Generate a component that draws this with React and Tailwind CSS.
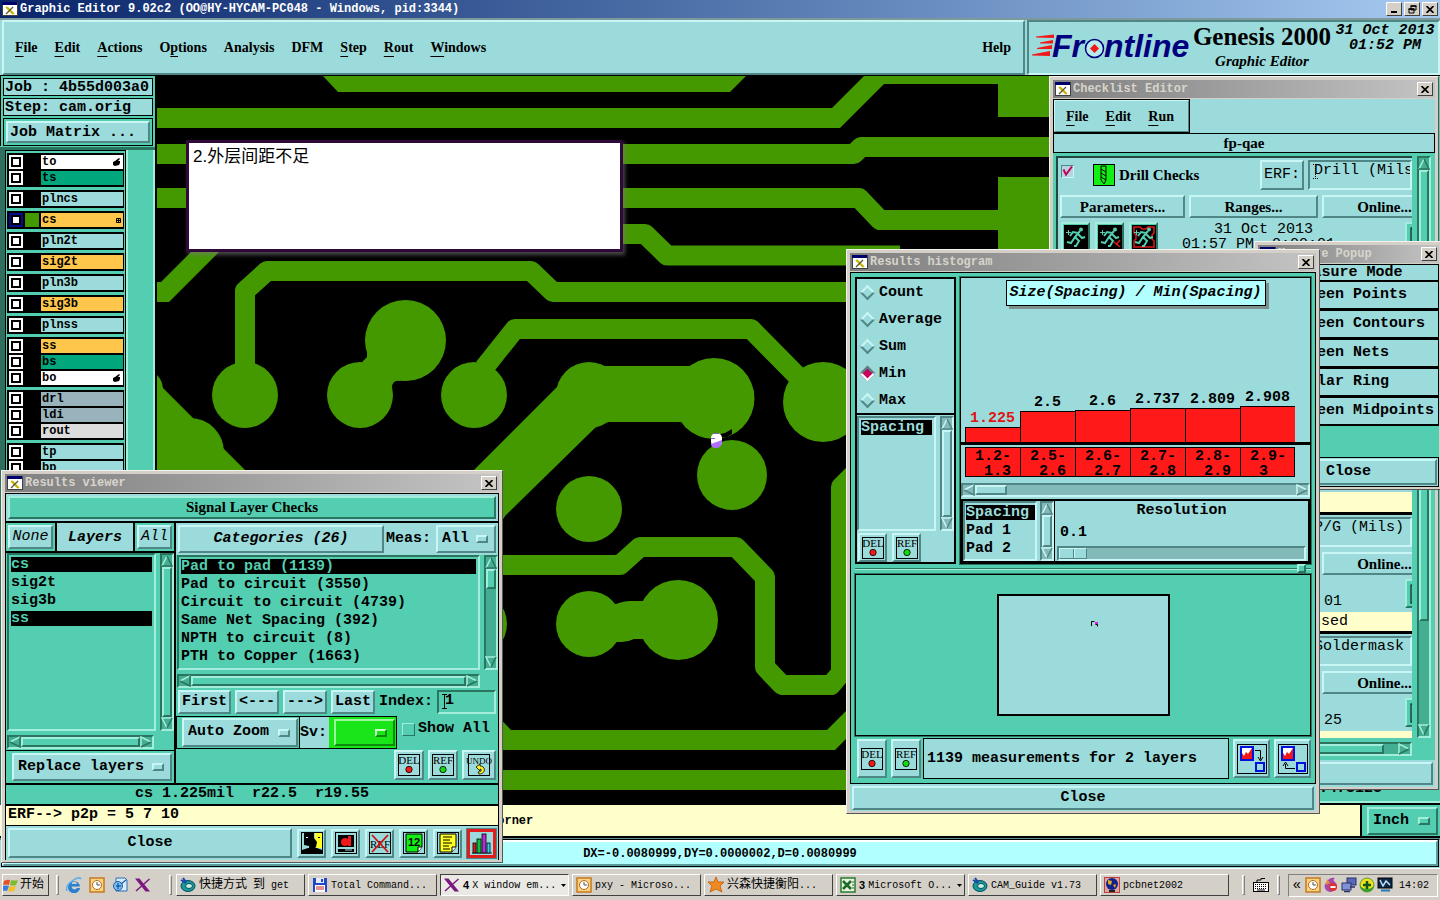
import React from "react";

const MONO = "[font-family:'Liberation_Mono','Noto_Sans_CJK_SC',monospace]";
const SERIF = "[font-family:'Liberation_Serif','Noto_Sans_CJK_SC',serif]";
const SANS = "[font-family:'Liberation_Sans','Noto_Sans_CJK_SC',sans-serif]";

const RAISED =
  "border-2 border-t-[#c8f6f4] border-l-[#c8f6f4] border-b-[#508686] border-r-[#508686] bg-[#9cdbdb]";
const SUNKEN =
  "border-2 border-t-[#508686] border-l-[#508686] border-b-[#c8f6f4] border-r-[#c8f6f4]";
const GREEN_RAISED =
  "border-2 border-t-[#a3eedb] border-l-[#a3eedb] border-b-[#2a7560] border-r-[#2a7560] bg-[#54ceb0]";
const GREEN_SUNKEN =
  "border-2 border-t-[#2a7560] border-l-[#2a7560] border-b-[#a3eedb] border-r-[#a3eedb]";
const WIN_BTN =
  "border border-t-white border-l-white border-b-[#404040] border-r-[#404040] bg-[#d4d0c8]";

/* ---------- shared widgets ---------- */

function XIcon() {
  return (
    <svg viewBox="0 0 16 14" className="h-[14px] w-4 shrink-0" aria-hidden="true">
      <rect x="0" y="0" width="16" height="14" fill="#404040" />
      <rect x="0" y="0" width="15" height="3" fill="#00006b" />
      <rect x="1" y="3" width="14" height="10" fill="#fff" />
      <path d="M4 5l7 7M5 5l7 7" stroke="#c8b400" strokeWidth="1.6" />
      <path d="M11 5l-7 7" stroke="#555533" strokeWidth="1.3" />
    </svg>
  );
}

function CloseGlyph() {
  return (
    <svg viewBox="0 0 8 7" className="h-[7px] w-2" aria-hidden="true">
      <path d="M.5 0l7 7M7.5 0l-7 7" stroke="#000" strokeWidth="1.7" />
    </svg>
  );
}

function CaptionButton({ label, children }) {
  return (
    <button aria-label={label} className={`flex h-[14px] w-4 items-center justify-center ${WIN_BTN}`}>
      {children}
    </button>
  );
}

function Win({ title, className, children }) {
  return (
    <section
      aria-label={title}
      className={`absolute flex flex-col border border-t-[#f4f2ee] border-l-[#f4f2ee] border-b-[#555] border-r-[#555] bg-[#d4d0c8] px-[3px] pt-[3px] pb-[2px] ${className}`}
    >
      <header className="flex h-[18px] shrink-0 items-center gap-[2px] bg-linear-to-r from-[#808080] to-[#c4c4c4] px-[2px]">
        <XIcon />
        <h2 className={`flex-1 text-[12px] leading-[18px] font-bold text-[#d8d4cc] ${MONO}`}>{title}</h2>
        <CaptionButton label={`Close ${title}`}>
          <CloseGlyph />
        </CaptionButton>
      </header>
      <div className="mt-px flex min-h-0 flex-1 flex-col">{children}</div>
    </section>
  );
}

function Arrow({ dir, green }) {
  const lt = green ? "#a3eedb" : "#c8f6f4";
  const dk = green ? "#2a7560" : "#508686";
  const shapes = {
    up: [["M5 0L0 10", lt], ["M5 0l5 10H0", dk]],
    down: [["M10 0H0l5 10", lt], ["M5 10L10 0", dk]],
    left: [["M10 0L0 5", lt], ["M10 0v10L0 5", dk]],
    right: [["M0 10V0l10 5", lt], ["M10 5L0 10", dk]],
  };
  return (
    <svg viewBox="-1 -1 12 12" className="size-[12px] shrink-0" aria-hidden="true">
      {shapes[dir].map(([d, c]) => (
        <path key={d} d={d} fill="none" stroke={c} strokeWidth="1.5" />
      ))}
    </svg>
  );
}

function VScroll({ green, thumb = "flex-1", className = "" }) {
  return (
    <div
      className={`flex w-[14px] shrink-0 flex-col items-center ${green ? GREEN_SUNKEN : SUNKEN} ${green ? "bg-[#43ae92]" : "bg-[#84b9b9]"} ${className}`}
    >
      <Arrow dir="up" green={green} />
      <div className="flex w-full min-h-0 flex-1 flex-col">
        <div className={`w-full ${thumb} ${green ? GREEN_RAISED : RAISED}`} />
      </div>
      <Arrow dir="down" green={green} />
    </div>
  );
}

function HScroll({ green, thumb = "flex-1", className = "" }) {
  return (
    <div
      className={`flex h-[14px] shrink-0 items-center ${green ? GREEN_SUNKEN : SUNKEN} ${green ? "bg-[#43ae92]" : "bg-[#84b9b9]"} ${className}`}
    >
      <Arrow dir="left" green={green} />
      <div className="flex h-full min-w-0 flex-1">
        <div className={`h-full ${thumb} ${green ? GREEN_RAISED : RAISED}`} />
      </div>
      <Arrow dir="right" green={green} />
    </div>
  );
}

function OptionMenu({ label, options, className = "", skin = RAISED, knob = RAISED }) {
  return (
    <div className={`flex items-center pr-[6px] ${skin} ${className}`}>
      <select aria-label={label} className="w-0 min-w-0 flex-1 appearance-none bg-transparent pl-[4px] outline-none">
        {options.map((o) => (
          <option key={o}>{o}</option>
        ))}
      </select>
      <span className={`h-[8px] w-3 shrink-0 ${knob}`} />
    </div>
  );
}

function BadgeIcon({ text, dot }) {
  return (
    <svg viewBox="0 0 24 24" className="size-6 overflow-visible" aria-hidden="true">
      <rect x="1.5" y="1.5" width="21" height="21" fill="none" stroke="#000" />
      <text x="12" y="11" textAnchor="middle" fontFamily="Liberation Serif" fontWeight="400" fontSize={text.length > 3 ? 9 : 11} fill="#000">
        {text}
      </text>
      {dot ? (
        <circle cx="12" cy="16.500" r="3.200" fill={dot} stroke="#000" strokeWidth=".8" />
      ) : (
        <path d="M9 14l4-3v2c6 0 6 8-1 8l-1-2c4 0 4-3 2-3v2z" fill="#ffee22" stroke="#000" strokeWidth=".8" />
      )}
    </svg>
  );
}

function IconButton({ label, className = "", children }) {
  return (
    <button aria-label={label} className={`flex shrink-0 items-center justify-center ${RAISED} ${className}`}>
      {children}
    </button>
  );
}

function TextCursor({ dotted }) {
  return (
    <svg viewBox="0 0 5 15" className="absolute top-[2px] left-[3px] h-[15px] w-[5px]" aria-hidden="true">
      <path d="M0 .5h5M2.500 0v15M0 14.500h5" stroke="#000" strokeDasharray={dotted ? "1 1" : undefined} />
    </svg>
  );
}

/* ---------- main window ---------- */

const MENUS = [
  ["", "F", "ile"],
  ["", "E", "dit"],
  ["", "A", "ctions"],
  ["O", "p", "tions"],
  ["Analysis", "", ""],
  ["DFM", "", ""],
  ["", "S", "tep"],
  ["", "R", "out"],
  ["", "W", "indows"],
];

function MenuButton({ parts }) {
  return (
    <button>
      {parts[0]}
      <span className="underline decoration-1 underline-offset-4">{parts[1]}</span>
      {parts[2]}
    </button>
  );
}

function FrontlineLogo() {
  return (
    <svg viewBox="0 -6 164 42" className="h-[42px] w-[164px] shrink-0" role="img" aria-label="Frontline">
      <g fill="#f01818">
        <path d="M4 5.500L22 3.500V7L4 6.500z" />
        <path d="M8 11.500L21 9V12.500L8 12.500z" />
        <path d="M5 17L20 14V18L5 18z" />
        <path d="M0 23.500L18 20V25L0 24.500z" />
      </g>
      <g fill="#00007f" fontFamily="Liberation Sans" fontWeight="700" fontStyle="italic" fontSize="32">
        <text x="20" y="26">Fr</text>
        <text x="72" y="26">ntline</text>
      </g>
      <circle cx="62.500" cy="17.500" r="9" fill="#b8ecec" stroke="#00007f" strokeWidth="1.500" />
      <path d="M62.500 13l4.500 4.500-4.500 4.500-4.500-4.500z" fill="#f01818" />
    </svg>
  );
}

function TopBar() {
  return (
    <>
      <header className="flex h-[18px] shrink-0 items-center gap-[2px] bg-linear-to-r from-[#0a246a] to-[#a6caf0] px-[2px]">
        <XIcon />
        <h1 className={`flex-1 text-[12px] leading-[18px] font-bold text-white ${MONO}`}>
          Graphic Editor 9.02c2 (OO@HY-HYCAM-PC048 - Windows, pid:3344)
        </h1>
        <CaptionButton label="Minimize">
          <span className="mt-[6px] h-[2px] w-[6px] bg-black" />
        </CaptionButton>
        <CaptionButton label="Restore">
          <svg viewBox="0 0 9 9" className="size-[9px]" aria-hidden="true">
            <path d="M3 1h5v4H3zM1 4h5v4H1z" fill="#d4d0c8" stroke="#000" />
            <path d="M2.500 1h6M.5 4h6" stroke="#000" strokeWidth="1.500" />
          </svg>
        </CaptionButton>
        <CaptionButton label="Close">
          <CloseGlyph />
        </CaptionButton>
      </header>
      <div className="flex h-[58px] shrink-0 border-t-2 border-[#7d9a9a] border-b border-b-black bg-[#9cdbdb]">
        <nav className={`ml-[2px] flex flex-1 items-center gap-[17px] pr-[12px] pl-[11px] text-[14px] font-bold ${SERIF} ${RAISED}`}>
          {MENUS.map((m) => (
            <MenuButton key={m.join("")} parts={m} />
          ))}
          <button className="ml-auto">Help</button>
        </nav>
        <div className={`ml-[2px] flex w-[413px] ${SUNKEN}`}>
          <div className="mt-[3px] ml-[3px] w-[160px]">
            <FrontlineLogo />
          </div>
          <div className={`flex flex-col items-center font-bold ${SERIF}`}>
            <p className="w-[140px] text-center text-[25px] leading-[29px] whitespace-nowrap">Genesis 2000</p>
            <p className="text-[15px] leading-5 italic">Graphic Editor</p>
          </div>
          <div className={`mt-[1px] flex-1 text-center text-[15px] leading-[15px] font-bold italic whitespace-nowrap ${MONO}`}>
            <p>31 Oct 2013</p>
            <p>01:52 PM</p>
          </div>
        </div>
      </div>
    </>
  );
}

const LAYER_GROUPS = [
  [{ n: "to", c: "bg-white", mark: "hand" }, { n: "ts", c: "bg-[#00a67c]" }],
  [{ n: "plncs", c: "bg-[#9cdbdb]" }],
  [{ n: "cs", c: "bg-[#ffc64c]", mark: "grid", active: true }],
  [{ n: "pln2t", c: "bg-[#9cdbdb]" }],
  [{ n: "sig2t", c: "bg-[#ffc64c]" }],
  [{ n: "pln3b", c: "bg-[#9cdbdb]" }],
  [{ n: "sig3b", c: "bg-[#ffc64c]" }],
  [{ n: "plnss", c: "bg-[#9cdbdb]" }],
  [{ n: "ss", c: "bg-[#ffc64c]" }, { n: "bs", c: "bg-[#00a67c]" }, { n: "bo", c: "bg-white", mark: "hand" }],
  [{ n: "drl", c: "bg-[#99b3bc]" }, { n: "ldi", c: "bg-[#99b3bc]" }, { n: "rout", c: "bg-[#dcdcdc]" }],
  [{ n: "tp", c: "bg-[#9cdbdb]" }, { n: "bp", c: "bg-[#9cdbdb]" }],
];

function LayerRow({ layer }) {
  return (
    <li className="flex h-4 items-center gap-[2px]">
      <span className={`flex size-[14px] items-center justify-center ${layer.active ? "bg-[#0a0a90]" : "bg-white"}`}>
        <span className="flex size-[10px] items-center justify-center border-2 border-black bg-white" />
      </span>
      <span className={`size-[14px] ${layer.active ? "bg-[#449900]" : "bg-black"}`} />
      <button className={`flex h-[14px] flex-1 items-center justify-between pr-[2px] pl-px text-[12px] leading-[14px] font-bold ${layer.c}`}>
        {layer.n}
        {layer.mark === "hand" && (
          <svg viewBox="0 0 8 8" className="size-2" aria-hidden="true">
            <path d="M0 4l2-1 4-3 1 1-2 2h2v2l-1 2-4 1-2-1z" />
          </svg>
        )}
        {layer.mark === "grid" && (
          <svg viewBox="0 0 5 5" className="size-[5px]" aria-hidden="true">
            <path d="M.5.5h4v4h-4zM2.500.5v4M.5 2.500h4" fill="none" stroke="#000" />
          </svg>
        )}
      </button>
    </li>
  );
}

function LeftPanel() {
  return (
    <aside className={`flex w-[157px] shrink-0 flex-col border-r-2 border-black bg-[#54ceb0] font-bold ${MONO}`}>
      <div className="flex flex-col gap-[2px] border-l border-black px-[2px] pt-[2px] text-[15px]">
        <p className="h-[18px] border border-black bg-[#9cdbdb] px-px leading-[17px] whitespace-nowrap">Job : 4b55d003a0</p>
        <p className="h-[18px] border border-black bg-[#9cdbdb] px-px leading-[17px] whitespace-nowrap">Step: cam.orig</p>
        <div className="border border-black p-[2px]">
          <button className={`block h-[22px] w-full px-[2px] text-left leading-[17px] ${RAISED}`}>Job Matrix ...</button>
        </div>
      </div>
      <div className="mt-px flex min-h-0 flex-1 overflow-hidden border-t-3 border-l-5 border-t-[#2a7560] border-l-[#2f6f60]">
        <ul className="flex w-[121px] flex-col gap-[3px] border-t border-x border-black px-px pt-[2px]">
          {LAYER_GROUPS.map((g) => (
            <li key={g[0].n}>
              <ul className="bg-black p-px pl-[2px]">
                {g.map((l) => (
                  <LayerRow key={l.n} layer={l} />
                ))}
              </ul>
            </li>
          ))}
        </ul>
        <div className="flex-1 border-x-2 border-l-[#a3eedb] border-r-[#a3eedb]" />
      </div>
    </aside>
  );
}

function BoardCanvas() {
  return (
    <svg
      viewBox="157 76 1043 730"
      preserveAspectRatio="xMinYMin slice"
      className="h-full w-full"
      role="img"
      aria-label="Copper traces of layer cs"
    >
      <rect x="157" y="76" width="1300" height="740" fill="#000" />
      <g fill="#449900">
        <path d="M323 76h423l-16 16H338z" />
        <path d="M157 108H832L864 76H1060V84H884L840 128H157z" />
        <path d="M998 76h62v41h-62zM998 177h62v90h-62z" />
        <path d="M157 282h4l34-34h28l-54 54h-12z" />
        <path d="M157 375q5 5 6 13L245 470V480H157z" />
        <path d="M558 386L470 474V552L504 518L505 516L597 426L620 366z" />
        <path d="M589 366h125v56H609l-20 4z" />
        <path d="M600 604L616 604Q624 601 630 601H678V639H634Q628 642 622 642H600z" />
        <path d="M362 362L367 357V352L400 340L412 380L396 381Q393 382 392 386L380 395z" />
        <path d="M490 708l21 22H827l30-30v28l-22 22H490z" />
        <path d="M480 770h400v20H480z" />
        <circle cx="190" cy="452" r="34" />
        <circle cx="245" cy="395" r="33" />
        <circle cx="360" cy="395" r="33" />
        <circle cx="405.500" cy="340.500" r="40.500" />
        <circle cx="474" cy="395" r="33" />
        <circle cx="823" cy="402" r="40" />
        <circle cx="589" cy="395" r="33" />
        <circle cx="714" cy="398.500" r="40.500" />
        <circle cx="732" cy="475" r="35" />
        <circle cx="589" cy="509" r="33" />
        <circle cx="589" cy="624" r="33" />
        <circle cx="678" cy="620" r="40" />
        <circle cx="474" cy="624" r="33" />
      </g>
      <g fill="none" stroke="#449900" strokeWidth="20" strokeLinejoin="round">
        <path d="M157 154H854L861 147H1060" />
        <path d="M157 198H859L880 220H1060" />
        <path d="M600 234H645L667 255.500H900" />
        <path d="M245 395V291L267 271H531L553 292H860" />
        <path d="M484 368L515 329H751L823 402" />
        <path d="M480 565H620L640 547H736L765 577V667L782 685H831L841 673V487L862 466" />
      </g>
      <path d="M720 438v-4l5-1 7-4v5l-5 3z" fill="#000" />
      <rect x="711" y="433" width="11" height="14" rx="5" fill="#fff" />
      <path d="M711 444l11-4v3q-1 5-6 5t-5-4z" fill="#b070ff" />
      <path d="M713 433.500h6M711 438.500h4" stroke="#8a60b0" />
    </svg>
  );
}

function StatusRows() {
  return (
    <>
      <div className={`flex h-[33px] shrink-0 border-b-2 border-black bg-[#ffffcc] font-bold ${MONO}`}>
        <p className="flex-1 pl-[346px] text-[12px] leading-8">&lt;M1&gt; - Select first corner</p>
        <div className="w-[80px] border-l-2 border-black bg-[#54ceb0] py-[2px] pr-[2px] pl-[5px] text-[15px]">
          <OptionMenu label="Units" options={["Inch", "MM"]} className="h-[28px]" skin={GREEN_RAISED} knob={GREEN_RAISED} />
        </div>
      </div>
      <div className="h-[30px] shrink-0 border-t-2 border-[#5f8c8c] bg-[#9cdbdb] px-[2px] pb-[2px]">
        <p
          className={`h-[26px] border-2 border-t-white border-l-white border-r-[#5a9a9a] border-b-[#5a9a9a] bg-[#b2ffff] text-center text-[12px] leading-6 font-bold outline outline-black ${MONO}`}
        >
          DX=-0.0080999,DY=0.0000002,D=0.0080999
        </p>
      </div>
    </>
  );
}

/* ---------- results viewer ---------- */

const CATEGORIES = [
  "Pad to pad (1139)",
  "Pad to circuit (3550)",
  "Circuit to circuit (4739)",
  "Same Net Spacing (392)",
  "NPTH to circuit (8)",
  "PTH to Copper (1663)",
];

function ListRow({ text, selected, onClass }) {
  return (
    <li className="flex h-[18px]">
      <button className={`h-[15px] flex-1 text-left leading-[15px] whitespace-nowrap ${selected ? onClass : ""}`}>{text}</button>
    </li>
  );
}

function ToolGlyph({ kind }) {
  return (
    <svg viewBox="0 0 24 24" className="size-6 overflow-visible" aria-hidden="true">
      {kind !== "bars" && <rect x="1.500" y="1.500" width="21" height="21" fill={kind === "faces" ? "#9cdbdb" : "none"} stroke="#000" />}
      {kind === "faces" && (
        <>
          <path d="M2 2h10v15l-1 1H7v4H2z" fill="#9cdbdb" />
          <path d="M4 2h8v16H9V15l-5-1z" fill="#000" />
          <path d="M13 2h9v15h-5l-2-3V2z" fill="#ffff22" />
          <path d="M2 19l6-2h9l5 2v3H2zM10 2h4v5l3 4-1 5-2 2h-4z" fill="#000" />
          <path d="M6 6h2v1H6z" fill="#fff" />
          <path d="M18 6h2v1h-2z" fill="#000" />
        </>
      )}
      {kind === "disk" && (
        <>
          <path d="M4 4h16v12H4zM4 18h16v3H4z" fill="#000" />
          <path d="M11 19h7" stroke="#9cdbdb" />
          <circle cx="11" cy="11" r="4" fill="#f01818" />
          <path d="M14 5h3v10h-3z" fill="#f01818" />
        </>
      )}
      {kind === "noref" && (
        <>
          <text x="12" y="17" textAnchor="middle" fontFamily="Liberation Serif" fontWeight="400" fontSize="11">REF</text>
          <path d="M4 4l16 17M20 4L4 21" stroke="#d01010" strokeWidth="1.800" />
        </>
      )}
      {kind === "pages" && (
        <>
          <path d="M4 3h16v13l-4 5H4z" fill="#12ef12" stroke="#000" />
          <path d="M16 21v-5h4" fill="#fff" stroke="#000" />
          <text x="12" y="15" textAnchor="middle" fontFamily="Liberation Sans" fontWeight="700" fontSize="11">12</text>
        </>
      )}
      {kind === "notes" && (
        <>
          <path d="M4 3h16v13l-4 5H4z" fill="#ffff22" stroke="#000" />
          <path d="M7 6h9M7 9h7M7 12h9M7 15h6M7 18h7" stroke="#000" />
          <path d="M16 21v-5h4" fill="#fff" stroke="#000" />
        </>
      )}
      {kind === "bars" && (
        <g stroke="#000" strokeWidth=".8">
          <path d="M2 22h20" />
          <rect x="3" y="12" width="3" height="10" fill="#e02020" />
          <rect x="7" y="8" width="4" height="14" fill="#10c040" />
          <rect x="12" y="3" width="4" height="19" fill="#b030d0" />
          <rect x="17" y="12" width="3" height="10" fill="#30d0ff" />
        </g>
      )}
    </svg>
  );
}

function ResultsViewer() {
  const sel = "bg-black text-[#54ceb0]";
  return (
    <Win title="Results viewer" className="top-[470px] left-[1px] h-[393px] w-[502px]">
      <div className={`flex min-h-0 flex-1 flex-col border-t border-x border-black bg-black text-[15px] font-bold ${MONO}`}>
        <div className="mb-[2px] bg-[#9cdbdb] p-[2px]">
          <h3 className={`h-[23px] text-center text-[15px] leading-[19px] ${SERIF} ${GREEN_RAISED}`}>Signal Layer Checks</h3>
        </div>
        <div className="flex h-[260px] shrink-0 gap-[2px]">
          <div className="flex w-[169px] flex-col bg-[#54ceb0]">
            <div className="flex h-[30px] gap-[2px] border-b-2 border-black bg-black italic">
              <div className="w-[49px] bg-[#54ceb0] p-[2px]">
                <button className={`h-[24px] w-full leading-[18px] font-normal italic ${RAISED}`}>None</button>
              </div>
              <h4 className="flex-1 bg-[#9cdbdb] text-center leading-[29px]">Layers</h4>
              <div className="w-[39px] bg-[#54ceb0] p-[2px]">
                <button className={`h-[24px] w-full leading-[18px] font-normal italic ${RAISED}`}>All</button>
              </div>
            </div>
            <div className="flex min-h-0 flex-1 gap-1 pl-px">
              <ul className={`flex-1 px-[2px] pt-[2px] ${GREEN_SUNKEN}`}>
                {["cs", "sig2t", "sig3b", "ss"].map((l) => (
                  <ListRow key={l} text={l} selected={l === "cs" || l === "ss"} onClass={sel} />
                ))}
              </ul>
              <VScroll green />
            </div>
            <div className="mt-1 mb-px pr-[20px] pl-px">
              <HScroll green />
            </div>
            <div className="border-t border-black py-[2px] pr-[2px] pl-[6px]">
              <OptionMenu label="Replace mode" options={["Replace layers", "Add layers"]} className="h-[28px]" />
            </div>
          </div>
          <div className="flex flex-1 flex-col bg-[#54ceb0]">
            <div className="flex h-[32px] items-center gap-[2px] bg-[#9cdbdb] px-[2px]">
              <button className={`h-[28px] w-[206px] italic ${RAISED}`}>Categories (26)</button>
              <label htmlFor="meas" className="flex-1 whitespace-nowrap">Meas:</label>
              <OptionMenu label="Meas" options={["All", "Min"]} className="h-[28px] w-[60px]" />
            </div>
            <div className="flex h-[115px] gap-1 pl-px">
              <ul className={`flex-1 px-[2px] pt-[2px] ${GREEN_SUNKEN}`}>
                {CATEGORIES.map((c, i) => (
                  <ListRow key={c} text={c} selected={i === 0} onClass={sel} />
                ))}
              </ul>
              <VScroll green thumb="h-[20px]" />
            </div>
            <div className="mt-1 pr-[18px] pl-px">
              <HScroll green />
            </div>
            <div className="mt-[2px] flex h-[24px] items-center gap-1 px-[2px]">
              <button className={`h-full w-[53px] leading-5 ${RAISED}`}>First</button>
              <button className={`h-full w-[44px] leading-5 ${RAISED}`}>&lt;---</button>
              <button className={`h-full w-[44px] leading-5 ${RAISED}`}>---&gt;</button>
              <button className={`h-full w-[44px] leading-5 ${RAISED}`}>Last</button>
              <label htmlFor="idx" className="flex-1">Index:</label>
              <div className={`relative h-full w-[59px] ${GREEN_SUNKEN}`}>
                <input id="idx" defaultValue="1" className="block h-[18px] w-full bg-transparent pl-[6px] leading-[18px]" />
                <TextCursor />
              </div>
            </div>
            <div className="mt-[2px] flex h-[33px]">
              <div className="w-[124px] border border-black py-px pr-px pl-[5px]">
                <OptionMenu label="Zoom mode" options={["Auto Zoom", "No Zoom"]} className="h-[29px]" />
              </div>
              <div className="flex border border-l-0 border-black">
                <span className="bg-[#9cdbdb] pr-[2px] leading-[31px]">Sv:</span>
                <div className="w-[67px] bg-[#19e619] py-[2px] pr-px pl-[5px]">
                  <OptionMenu
                    label="Severity colour"
                    options={[""]}
                    className="h-[27px]"
                    skin="border-2 border-t-[#9cf59c] border-l-[#9cf59c] border-b-[#0d8a0d] border-r-[#0d8a0d] bg-[#19e619]"
                    knob="border-2 border-t-[#c8ffc8] border-l-[#c8ffc8] border-b-[#0d8a0d] border-r-[#0d8a0d]"
                  />
                </div>
              </div>
              <label className="flex items-center gap-[3px] self-start pt-[5px] pl-[5px] leading-4">
                <input type="checkbox" className="size-[13px] appearance-none border border-t-[#a3eedb] border-l-[#a3eedb] border-b-[#2a7560] border-r-[#2a7560]" />
                Show All
              </label>
            </div>
            <div className="mt-px flex justify-end gap-1 pr-[2px]">
              <IconButton label="Delete" className="size-[30px]"><BadgeIcon text="DEL" dot="#f01818" /></IconButton>
              <IconButton label="Reference" className="size-[30px]"><BadgeIcon text="REF" dot="#12d812" /></IconButton>
              <IconButton label="Undo" className="h-[30px] w-[34px]"><BadgeIcon text="UNDO" /></IconButton>
            </div>
          </div>
        </div>
        <p className="mt-[2px] h-[19px] bg-[#54ceb0] text-center leading-[18px] whitespace-pre">cs 1.225mil  r22.5  r19.55</p>
        <p className="mt-[2px] h-[19px] bg-[#ffffcc] pl-[2px] leading-[18px]">ERF--&gt; p2p = 5 7 10</p>
        <div className="mt-px flex flex-1 items-center gap-1 bg-[#9cdbdb] px-[2px]">
          <button className={`h-[30px] flex-1 ${RAISED}`}>Close</button>
          <div className="flex gap-[5px] pl-px">
            {[
              ["Compare", "faces"],
              ["Save", "disk"],
              ["No reference", "noref"],
              ["Pages", "pages"],
              ["Notes", "notes"],
            ].map(([l, k]) => (
              <IconButton key={k} label={l} className="size-[29px]"><ToolGlyph kind={k} /></IconButton>
            ))}
            <button aria-label="Histogram" className="flex size-[29px] items-center justify-center border-3 border-[#e01c1c] bg-[#9cdbdb] outline outline-[#508686]">
              <ToolGlyph kind="bars" />
            </button>
          </div>
        </div>
      </div>
    </Win>
  );
}

/* ---------- histogram ---------- */

const BINS = [
  { value: "1.225", h: 15, from: "1.2-", to: "1.3", hot: true },
  { value: "2.5", h: 31, from: "2.5-", to: "2.6" },
  { value: "2.6", h: 32, from: "2.6-", to: "2.7" },
  { value: "2.737", h: 34, from: "2.7-", to: "2.8" },
  { value: "2.809", h: 34, from: "2.8-", to: "2.9" },
  { value: "2.908", h: 36, from: "2.9-", to: "3" },
];

function LinkGlyph({ flip }) {
  return (
    <svg viewBox="0 0 32 32" className="size-8" aria-hidden="true">
      <rect x="1.500" y="1.500" width="29" height="29" fill="none" stroke="#000" />
      <rect x="5" y="4" width="12" height="13" fill="#fff" stroke="#0010e0" strokeWidth="2" />
      <path d="M6 16v-6l2 3 2-4 2 2 4-6v11z" fill="#f01818" />
      <rect x="20" y="20" width="8" height="8" fill="#9cdbdb" stroke="#0010e0" strokeWidth="2" />
      {flip ? (
        <path d="M18 25.500H8.500V21M6 23l2.500-4 2.500 4" fill="none" stroke="#000" />
      ) : (
        <path d="M19 7.500h5.500v9M22 14l2.500 4 2.500-4" stroke="#000" fill="none" />
      )}
    </svg>
  );
}

function Histogram() {
  return (
    <Win title="Results histogram" className="top-[249px] left-[846px] h-[565px] w-[474px]">
      <div className={`flex min-h-0 flex-1 flex-col bg-[#9cdbdb] text-[15px] font-bold ${MONO}`}>
        <div className="flex h-[512px] flex-col border border-black bg-[#54ceb0] px-[4px] py-[4px]">
          <div className="flex h-[288px] gap-1">
            <div className="flex w-[101px] flex-col border-2 border-black bg-[#9cdbdb]">
              <fieldset className="flex h-[136px] shrink-0 flex-col border-b-2 border-black">
                {["Count", "Average", "Sum", "Min", "Max"].map((r) => (
                  <label key={r} className="flex h-[27px] items-center gap-[6px] pl-[5px] leading-[27px]">
                    <input
                      type="radio"
                      name="stat"
                      defaultChecked={r === "Min"}
                      className="size-[11px] rotate-45 appearance-none border-2 border-t-[#c8f6f4] border-l-[#c8f6f4] border-b-[#508686] border-r-[#508686] checked:border-t-[#508686] checked:border-l-[#508686] checked:border-b-white checked:border-r-white checked:bg-[#c8005a]"
                    />
                    {r}
                  </label>
                ))}
              </fieldset>
              <div className="flex h-[116px] gap-1 pt-px">
                <ul className={`flex-1 p-[2px] ${SUNKEN}`}>
                  <ListRow text="Spacing" selected onClass="bg-black text-[#9cdbdb]" />
                </ul>
                <VScroll />
              </div>
              <div className="flex gap-[5px] pt-[2px] pl-px">
                <IconButton label="Delete" className="size-[29px]"><BadgeIcon text="DEL" dot="#f01818" /></IconButton>
                <IconButton label="Reference" className="size-[29px]"><BadgeIcon text="REF" dot="#12d812" /></IconButton>
              </div>
            </div>
            <div className="flex flex-1 flex-col border border-black bg-[#9cdbdb] outline outline-[#2a7560]">
              <div className="flex h-[167px] flex-col items-center border-b-3 border-black pt-[2px]">
                <h3 className="w-[260px] border border-black bg-[#b2ffff] text-center leading-6 italic shadow-[3px_3px_0_#7d8f8f]">
                  Size(Spacing) / Min(Spacing)
                </h3>
                <div className="mt-auto flex w-full items-end pl-[4px]">
                  {BINS.map((b) => (
                    <div key={b.from} className="w-[55px] text-center">
                      <p className={`leading-[17px] ${b.hot ? "text-[#e01414]" : ""}`}>{b.value}</p>
                      <div className="border-t border-l border-black bg-[#ff1919]" style={{ height: b.h }} />
                    </div>
                  ))}
                </div>
              </div>
              <div className="flex h-[38px] pt-[2px] pl-[4px]">
                {BINS.map((b) => (
                  <div key={b.from} className="h-[30px] w-[55px] border border-r-0 border-black bg-[#ff1919] pt-px leading-[15px] whitespace-pre last:border-r">
                    <p className="pl-[9px]">{b.from}</p>
                    <p className="pl-[18px]">{b.to}</p>
                  </div>
                ))}
              </div>
              <HScroll thumb="w-[32px]" />
              <div className="mt-[2px] flex flex-1 border-2 border-black">
                <ul className={`w-[74px] overflow-hidden pt-[2px] pl-px ${SUNKEN}`}>
                  <ListRow text="Spacing" selected onClass="bg-black text-[#9cdbdb]" />
                  <ListRow text="Pad 1" />
                  <ListRow text="Pad 2" />
                </ul>
                <VScroll className="ml-[3px]" />
                <div className="flex flex-1 flex-col border-l border-black px-[2px]">
                  <label htmlFor="res" className="text-center leading-[20px]">Resolution</label>
                  <output className="mt-[2px] pl-[3px] leading-[20px]">0.1</output>
                  <input
                    id="res"
                    type="range"
                    min="0"
                    max="100"
                    defaultValue="0"
                    className={`mt-auto h-[15px] w-full appearance-none bg-[#84b9b9] ${SUNKEN} [&::-webkit-slider-thumb]:h-[11px] [&::-webkit-slider-thumb]:w-[28px] [&::-webkit-slider-thumb]:appearance-none [&::-webkit-slider-thumb]:border [&::-webkit-slider-thumb]:border-t-[#c8f6f4] [&::-webkit-slider-thumb]:border-l-[#c8f6f4] [&::-webkit-slider-thumb]:border-r-[#508686] [&::-webkit-slider-thumb]:border-b-[#508686] [&::-webkit-slider-thumb]:bg-[linear-gradient(90deg,#9cdbdb_13px,#508686_13px,#508686_14px,#c8f6f4_14px,#c8f6f4_15px,#9cdbdb_15px)]`}
                  />
                </div>
              </div>
            </div>
          </div>
          <div className="flex h-[10px] items-center" role="separator">
            <span className="h-[2px] flex-1 border-t border-b border-t-[#2a7560] border-b-[#a3eedb]" />
            <span className={`size-[9px] ${GREEN_RAISED}`} />
            <span className="h-[2px] w-[5px] border-t border-b border-t-[#2a7560] border-b-[#a3eedb]" />
          </div>
          <div className="flex h-[163px] items-center justify-center border border-black outline outline-[#2a7560]">
            <svg viewBox="0 0 173 122" className="h-[122px] w-[173px]" role="img" aria-label="Measurement location overview">
              <rect x="1" y="1" width="171" height="120" fill="#9cdbdb" stroke="#000" strokeWidth="2" />
              <path d="M94.500 32v-4.500h3M98.500 30.500h2v2" fill="none" stroke="#000" />
              <rect x="98" y="28" width="3" height="2" fill="#e020e0" />
            </svg>
          </div>
          <div className="mt-[2px] flex h-[41px] items-stretch gap-1 pl-[2px]">
            <IconButton label="Delete measurement" className="my-px w-[30px]"><BadgeIcon text="DEL" dot="#f01818" /></IconButton>
            <IconButton label="Reference measurement" className="my-px w-[30px]"><BadgeIcon text="REF" dot="#12d812" /></IconButton>
            <p className="-ml-[2px] flex-1 border border-black bg-[#9cdbdb] pl-[3px] leading-10">1139 measurements for 2 layers</p>
            <IconButton label="Histogram to viewer" className="my-px w-[37px]"><LinkGlyph /></IconButton>
            <IconButton label="Viewer to histogram" className="my-px w-[37px]"><LinkGlyph flip /></IconButton>
          </div>
        </div>
        <div className="flex-1 p-[2px]">
          <button className={`h-full w-full leading-5 ${RAISED}`}>Close</button>
        </div>
      </div>
    </Win>
  );
}

/* ---------- checklist + measure popup ---------- */

const CHECKS = [
  { id: "drill", name: "Drill Checks", erf: "Drill (Mils)", date: "31 Oct 2013", time: "01:57 PM  0:00:01", note: "" },
  { id: "net", name: "", erf: "", date: "", time: "", note: "" },
  { id: "sig", name: "", erf: "", date: "", time: "", note: "" },
  { id: "pg", name: "", erf: "P/G (Mils)", date: "", time: "01", note: "used" },
  { id: "mask", name: "", erf: "Soldermask", date: "", time: "25", note: "" },
];

function Runner({ red, mark }) {
  return (
    <svg viewBox="0 0 24 24" className="size-6" aria-hidden="true">
      <rect width="24" height="24" fill="#000" />
      {red && <path d="M2 2h6l2 2h4l2-2h6v6l-2 2v4l2 2v6H2v-6l2-2v-4L2 8z" fill="none" stroke="#e01818" strokeWidth="1.500" />}
      <circle cx="17" cy="4.500" r="2" fill="#54ceb0" />
      <path d="M16 6l-5 6 4 4-3 5h-2M11 12l-4 6-4-1M14 9l4 4 3-1M14 8l-5-1-3 4" fill="none" stroke="#54ceb0" strokeWidth="2" />
      <path d="M2 7.500h5M4.500 5v5" stroke="#54ceb0" />
      {mark && <path d="M16 17l6 5M22 15l-4 5" stroke="#e01818" strokeWidth="1.500" />}
    </svg>
  );
}

function CheckItem({ item }) {
  const green = `flex size-[29px] shrink-0 items-center justify-center ${GREEN_RAISED}`;
  return (
    <li className="flex h-[119px] w-[392px] shrink-0 flex-col border-b-3 border-black bg-[#9cdbdb]">
      <div className="flex h-[33px] items-center pt-px pl-[3px]">
        <span className="relative mb-[8px] size-[13px]">
          <input
            type="checkbox"
            defaultChecked
            aria-label={`Enable ${item.id}`}
            className="peer block size-[13px] appearance-none border border-t-[#508686] border-l-[#508686] border-b-[#c8f6f4] border-r-[#c8f6f4] bg-[#b4d4e0]"
          />
          <svg viewBox="0 0 13 13" className="pointer-events-none absolute inset-0 hidden size-[13px] peer-checked:block" aria-hidden="true">
            <path d="M2.500 4.500l2.500 5 6-8" fill="none" stroke="#c8005a" strokeWidth="2" />
          </svg>
        </span>
        <span className="ml-[19px] flex size-[22px] items-center justify-center border border-black bg-[#12ef12]">
          <svg viewBox="0 0 10 20" className="h-[20px] w-[10px]" aria-hidden="true">
            <path d="M2 1h5v14l-2 4-3-4zM2 4l5 3M2 8l5 3M2 12l5 3" fill="none" stroke="#000" />
          </svg>
        </span>
        <p className={`ml-[4px] w-[141px] text-[15px] font-bold ${SERIF}`}>{item.name}</p>
        <button className={`h-[30px] w-[44px] text-[15px] font-normal ${RAISED}`}>ERF:</button>
        <div className={`relative ml-[4px] h-[30px] w-[104px] ${SUNKEN}`}>
          <input
            aria-label={`ERF ${item.id}`}
            defaultValue={item.erf}
            className="block h-[18px] w-full bg-transparent pl-[4px] text-[15px] leading-[18px] font-normal"
          />
          {item.id === "drill" && <TextCursor dotted />}
        </div>
      </div>
      <div className={`mt-1 flex gap-[4px] pl-[2px] text-[15px] font-bold ${SERIF}`}>
        <button className={`h-[23px] w-[125px] leading-[18px] ${RAISED}`}>Parameters...</button>
        <button className={`h-[23px] w-[129px] leading-[18px] ${RAISED}`}>Ranges...</button>
        <button className={`h-[23px] w-[125px] leading-[18px] ${RAISED}`}>Online...</button>
      </div>
      <div className="mt-[4px] flex gap-[5px] pl-[3px] text-[15px] font-normal">
        <button aria-label="Run on job" className={green}><Runner /></button>
        <button aria-label="Run on feature" className={green}><Runner mark /></button>
        <button aria-label="Run in box" className={green}><Runner red /></button>
        <div className="w-[237px] pl-[19px] leading-[15px] whitespace-pre">
          <p className="h-[15px] pl-[32px]">{item.date}</p>
          <p className={item.time.length > 2 ? "" : "pl-[142px]"}>{item.time}</p>
        </div>
        <button aria-label="Zoom result" className={green}>
          <svg viewBox="0 0 20 20" className="size-5" aria-hidden="true">
            <rect x="1" y="1" width="18" height="18" fill="none" stroke="#000" />
            <circle cx="10" cy="9" r="6" fill="none" stroke="#000" />
            <path d="M6 9h8M10 5v8" stroke="#000" />
          </svg>
        </button>
      </div>
      <p className="mt-[3px] flex-1 bg-[#ffffcc] pl-[254px] text-[15px] leading-[19px] font-normal">{item.note}</p>
    </li>
  );
}

function Checklist() {
  return (
    <Win title="Checklist Editor" className="top-[76px] left-[1049px] h-[714px] w-[390px]">
      <div className={`flex min-h-0 flex-1 flex-col bg-[#9cdbdb] ${MONO}`}>
        <nav className={`flex h-[34px] w-[137px] shrink-0 items-center gap-[17px] pl-[11px] text-[14px] font-bold outline -outline-offset-1 outline-black ${SERIF} ${RAISED}`}>
          <MenuButton parts={["", "F", "ile"]} />
          <MenuButton parts={["", "E", "dit"]} />
          <MenuButton parts={["", "R", "un"]} />
        </nav>
        <h3 className={`h-[20px] shrink-0 border border-black text-center text-[15px] leading-[18px] font-bold ${SERIF}`}>fp-qae</h3>
        <div className="flex min-h-0 flex-1 flex-col gap-1 bg-[#54ceb0] pt-[3px] pl-[3px]">
          <div className="flex min-h-0 flex-1 gap-[5px] pr-[4px]">
            <ul className="flex-1 overflow-hidden border-2 border-r-0 border-b-0 border-[#204840]">
              {CHECKS.map((c) => (
                <CheckItem key={c.id} item={c} />
              ))}
            </ul>
            <VScroll green thumb="h-[451px]" />
          </div>
          <div className="flex pr-[23px]">
            <HScroll green thumb="w-[314px]" className="flex-1" />
          </div>
          <div className="bg-[#9cdbdb] p-[2px]">
            <button aria-label="Close checklist" className={`block h-[23px] w-full ${RAISED}`} />
          </div>
        </div>
      </div>
    </Win>
  );
}

function MeasurePopup() {
  return (
    <Win title="Measure Popup" className="top-[241px] left-[1254px] h-[249px] w-[189px]">
      <div className={`flex flex-1 flex-col bg-[#54ceb0] text-[15px] font-bold ${MONO}`}>
        <h3 className="h-[17px] border border-black bg-[#9cdbdb] text-center leading-4">Measure Mode</h3>
        {["Points", "Contours", "Nets", "", "Midpoints"].map((m, i) => (
          <button key={i} className="h-[29px] border border-b-2 border-black bg-[#9cdbdb] pl-[22px] text-left whitespace-nowrap">
            {m ? `Between ${m}` : "Annular Ring"}
          </button>
        ))}
        <div className="mt-auto border border-black bg-[#9cdbdb] p-px">
          <button className={`h-[26px] w-full leading-5 ${RAISED}`}>Close</button>
        </div>
      </div>
    </Win>
  );
}

/* ---------- taskbar ---------- */

function TaskIcon({ kind }) {
  return (
    <svg viewBox="0 0 16 16" className="size-4 shrink-0" aria-hidden="true">
      {kind === "start" && (
        <>
          <path d="M1 4q3-2 6-1L6 8Q4 7 0 8z" fill="#e8502a" />
          <path d="M8 3q3 1 7 0l-2 5q-3 1-6 0z" fill="#7fba28" />
          <path d="M0 9q3-1 6 0l-2 5q-2-1-4 0z" fill="#3a7be0" />
          <path d="M7 9q3 1 6 0l-2 5q-3 1-6 0z" fill="#f5c020" />
        </>
      )}
      {kind === "ie" && (
        <>
          <path d="M14 9.500H5.500a3 3 0 0 0 5.500 1.500H14A6 6 0 1 1 14 9.500zM5.500 7H11a2.800 2.800 0 0 0-5.500 0z" fill="#2b7fd0" />
          <path d="M1 14Q-1 9 6 4T15 2" fill="none" stroke="#5ab0ee" strokeWidth="1.500" />
        </>
      )}
      {kind === "clock" && (
        <>
          <rect x="1" y="1" width="14" height="14" fill="#f6d480" stroke="#c87820" strokeWidth="1.500" />
          <circle cx="8" cy="8" r="4.500" fill="#fff" stroke="#b86a18" />
          <path d="M8 5v3h3" fill="none" stroke="#555" />
        </>
      )}
      {kind === "mail" && (
        <>
          <path d="M4 1h9l2 2v11H4z" fill="#d8ecfc" stroke="#2a6cb8" />
          <circle cx="6" cy="9" r="4.500" fill="#7cc0f0" stroke="#1c5ca8" />
          <path d="M4 9h5M6 6v6M9 7l5-4" stroke="#1c5ca8" strokeWidth="1.300" />
        </>
      )}
      {kind === "x" && (
        <>
          <path d="M0 1.500h4.500L15 14.500h-4.500z" fill="#7a1880" />
          <path d="M14.500 2L1 14" stroke="#7a1880" strokeWidth="1.500" />
        </>
      )}
      {kind === "cam" && (
        <>
          <ellipse cx="8" cy="9" rx="7" ry="5.500" fill="#189a98" stroke="#0a4a60" />
          <ellipse cx="9" cy="9" rx="3.500" ry="2.500" fill="#c8f0e0" stroke="#0a4a60" />
          <path d="M1 3l5 3M3 1l3 4" stroke="#1848b0" strokeWidth="2" />
        </>
      )}
      {kind === "floppy" && (
        <>
          <path d="M1 1h14v14H1z" fill="#2048c8" />
          <path d="M4 1h8v5H4z" fill="#e8ecf8" />
          <path d="M9 2h2v3H9z" fill="#2048c8" />
          <path d="M3 8h10v7H3z" fill="#fff" />
          <path d="M4 10h8M4 12h8" stroke="#d02020" />
        </>
      )}
      {kind === "star" && <path d="M8 0l2 5 6 0-4 4 2 6-6-3-6 3 2-6-4-4 6 0z" fill="#f08a20" stroke="#c05808" strokeWidth=".8" />}
      {kind === "excel" && (
        <>
          <rect x="1" y="1" width="14" height="14" fill="#e8f4e0" stroke="#2a7a30" strokeWidth="1.500" />
          <path d="M3 4l8 8M11 4l-8 8" stroke="#1c6a24" strokeWidth="2.500" />
          <path d="M12 5h2M12 8h2M12 11h2" stroke="#1c6a24" />
        </>
      )}
      {kind === "globe" && (
        <>
          <rect x=".5" y=".5" width="15" height="15" fill="#d8a8a0" stroke="#c04040" />
          <circle cx="8" cy="7" r="6" fill="#10208c" />
          <path d="M4 3l4 1-1 4-3-1zM9 8l3-1-1 4z" fill="#e0b020" />
          <path d="M5 14h6" stroke="#202020" strokeWidth="2" />
        </>
      )}
      {kind === "kbd" && (
        <>
          <path d="M4 5V3h4V1.500h4" fill="none" stroke="#000" />
          <rect x=".5" y="5.500" width="15" height="9" fill="#fff" stroke="#000" />
          <path d="M2 7.500h12M2 9.500h12M2 11.500h12" stroke="#000" strokeDasharray="1 1" />
          <path d="M4 13h8" stroke="#000" />
        </>
      )}
      {kind === "flame" && (
        <>
          <path d="M3 6q3-6 9-5-3 2 0 4 4 4 0 8-5 4-9 0-3-4 0-7z" fill="#a848a8" />
          <path d="M4 2l3 4-4 2z" fill="#f09020" />
          <circle cx="10" cy="10" r="4" fill="#e03030" />
          <path d="M7.500 10h5" stroke="#fff" strokeWidth="2" />
        </>
      )}
      {kind === "net" && (
        <>
          <rect x="6" y="1" width="9" height="7" fill="#5868b8" stroke="#283068" />
          <rect x="1" y="6" width="9" height="7" fill="#8090d8" stroke="#283068" />
          <path d="M3 14.500h6M9 10h5" stroke="#283068" strokeWidth="1.500" />
        </>
      )}
      {kind === "plus" && (
        <>
          <circle cx="8" cy="8" r="7" fill="#f0e020" stroke="#58a028" />
          <path d="M1 8a7 7 0 0 0 14 0q-2 4-7 4t-7-4z" fill="#38a028" />
          <path d="M8 4v8M4 8h8" stroke="#105818" strokeWidth="2.500" />
        </>
      )}
      {kind === "mon" && (
        <>
          <rect x="1" y="1" width="14" height="10" fill="#102848" stroke="#000" />
          <path d="M3 3l3 6 3-5 4 4" fill="none" stroke="#b8e0f8" strokeWidth="1.500" />
          <path d="M4 13.500h9" stroke="#2878b8" strokeWidth="2" />
        </>
      )}
    </svg>
  );
}

const TASKS = [
  { icon: "cam", text: "快捷方式 到 get" },
  { icon: "floppy", text: "Total Command..." },
  { icon: "x", text: "X window em...", count: "4", pressed: true },
  { icon: "clock", text: "pxy - Microso..." },
  { icon: "star", text: "兴森快捷衡阳..." },
  { icon: "excel", text: "Microsoft O...", count: "3" },
  { icon: "cam", text: "CAM_Guide v1.73" },
  { icon: "globe", text: "pcbnet2002" },
];

function TaskText({ text }) {
  const parts = text.split(/([\u4e00-\u9fff]+)/).filter(Boolean);
  return (
    <span className="whitespace-pre">
      {parts.map((p, i) => (
        <span key={i} className={/[\u4e00-\u9fff]/.test(p) ? "text-[12px]" : "text-[10px]"}>
          {p}
        </span>
      ))}
    </span>
  );
}

function Grip() {
  return <span className="h-[20px] w-[3px] shrink-0 border border-t-white border-l-white border-b-[#808080] border-r-[#808080]" />;
}

function Taskbar() {
  return (
    <footer className={`flex h-[32px] shrink-0 items-center border-t border-white bg-[#d4d0c8] pt-px pl-[2px] text-[12px] ${MONO}`}>
      <button className={`flex h-[22px] w-[47px] shrink-0 items-center gap-px ${WIN_BTN}`}>
        <TaskIcon kind="start" />
        开始
      </button>
      <div className="ml-[7px] flex w-[120px] shrink-0 items-center gap-[7px]">
        <Grip />
        <button aria-label="Internet Explorer"><TaskIcon kind="ie" /></button>
        <button aria-label="Outlook"><TaskIcon kind="clock" /></button>
        <button aria-label="Outlook Express"><TaskIcon kind="mail" /></button>
        <button aria-label="X server"><TaskIcon kind="x" /></button>
        <span className="mr-[4px] ml-auto flex"><Grip /></span>
      </div>
      <div className="flex min-w-0 flex-1 gap-[3px]">
        {TASKS.map((t) => (
          <button
            key={t.text}
            className={`flex h-[22px] w-[129px] items-center gap-[3px] overflow-hidden pl-[3px] ${
              t.pressed
                ? "border border-t-[#404040] border-l-[#404040] border-b-white border-r-white bg-[#ebe9e4]"
                : WIN_BTN
            }`}
          >
            <TaskIcon kind={t.icon} />
            {t.count && <b className={`text-[11px] ${SANS}`}>{t.count}</b>}
            <TaskText text={t.text} />
            {t.count && (
              <svg viewBox="0 0 5 3" className="mr-[2px] ml-auto h-[3px] w-[5px]" aria-hidden="true">
                <path d="M0 0h5L2.500 3z" />
              </svg>
            )}
          </button>
        ))}
      </div>
      <div className="flex shrink-0 items-center gap-[8px] pr-[2px]">
        <Grip />
        <button aria-label="Keyboard layout"><TaskIcon kind="kbd" /></button>
        <Grip />
        <div className="flex h-[23px] items-center gap-[2px] border border-t-[#808080] border-l-[#808080] border-b-white border-r-white pr-[8px] pl-[4px]">
          <span className="mr-[2px] text-[14px]">«</span>
          <TaskIcon kind="clock" />
          <TaskIcon kind="flame" />
          <TaskIcon kind="net" />
          <TaskIcon kind="plus" />
          <TaskIcon kind="mon" />
          <time className="ml-[4px] text-[10px]">14:02</time>
        </div>
      </div>
    </footer>
  );
}

/* ---------- page ---------- */

export default function App() {
  return (
    <div className="relative flex h-screen flex-col overflow-hidden bg-black text-black">
      <TopBar />
      <main className="flex min-h-0 flex-1">
        <LeftPanel />
        <div className="min-w-0 flex-1">
          <BoardCanvas />
        </div>
        <aside className={`flex w-[240px] flex-col justify-end border-b-2 border-black bg-[#54ceb0] text-[15px] font-bold ${MONO}`}>
          <p className="border-b-2 border-[#a3eedb] pb-[4px] pl-[110px] leading-4">4.473125</p>
        </aside>
      </main>
      <StatusRows />
      <Taskbar />

      <p className={`absolute top-[140px] left-[186px] h-[112px] w-[437px] border-3 border-[#30083a] bg-white px-[4px] pt-[2px] text-[17px] leading-6 shadow-[2px_3px_4px_rgba(120,120,120,0.6)] ${SANS}`}>
        2.外层间距不足
      </p>
      <Checklist />
      <MeasurePopup />
      <Histogram />
      <ResultsViewer />
    </div>
  );
}
